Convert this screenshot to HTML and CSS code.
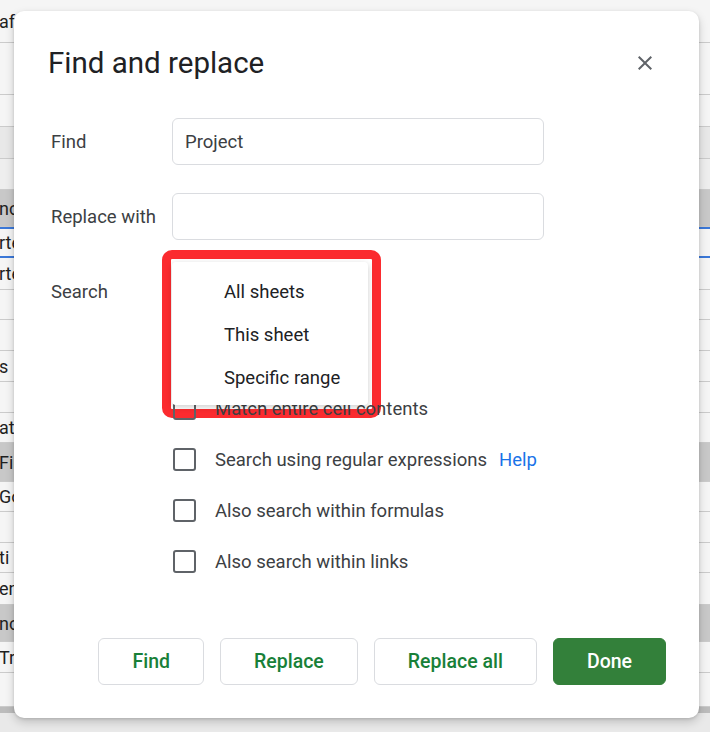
FILE: index.html
```html
<!DOCTYPE html>
<html lang="en">
<head>
  <meta charset="UTF-8">
  <title>Find and replace</title>
  <link rel="stylesheet" href="styles.css">
</head>
<body>
  <div class="sheet">
    <div class="row"><span>af</span></div>
    <div class="row"></div>
    <div class="row"></div>
    <div class="row shade-soft"></div>
    <div class="row shade-faint"></div>
    <div class="row shade"><span>nc</span></div>
    <div class="row selected"><span>rte</span></div>
    <div class="row"><span>rte</span></div>
    <div class="row"></div>
    <div class="row"></div>
    <div class="row"><span>s</span></div>
    <div class="row"></div>
    <div class="row"><span>ati</span></div>
    <div class="row shade"><span>Fin</span></div>
    <div class="row"><span>Go</span></div>
    <div class="row"></div>
    <div class="row"><span>ti</span></div>
    <div class="row"><span>en</span></div>
    <div class="row shade"><span>nc</span></div>
    <div class="row"><span>Tra</span></div>
    <div class="row"></div>
    <div class="row scrollbar"></div>
    <div class="row foot"></div>
  </div>

  <div class="dialog">
    <div class="dialog-head">
      <h1>Find and replace</h1>
      <button class="close" aria-label="Close">
        <svg viewBox="0 0 24 24" width="24" height="24"><path d="M19 6.41L17.59 5 12 10.59 6.41 5 5 6.41 10.59 12 5 17.59 6.41 19 12 13.41 17.59 19 19 17.59 13.41 12z" fill="#5f6368"/></svg>
      </button>
    </div>

    <div class="form">
      <label>Find</label>
      <div class="field">Project</div>
      <label>Replace with</label>
      <div class="field"></div>
      <label>Search</label>
      <div class="select">All sheets</div>
    </div>

    <div class="checks">
      <div class="check"><span class="box"></span>Match case</div>
      <div class="check"><span class="box"></span>Match entire cell contents</div>
      <div class="check"><span class="box"></span>Search using regular expressions <a class="help" href="#">Help</a></div>
      <div class="check"><span class="box"></span>Also search within formulas</div>
      <div class="check"><span class="box"></span>Also search within links</div>
    </div>

    <div class="actions">
      <button class="btn">Find</button>
      <button class="btn">Replace</button>
      <button class="btn">Replace all</button>
      <button class="btn primary">Done</button>
    </div>

    <div class="menu">
      <div class="menu-item">All sheets</div>
      <div class="menu-item">This sheet</div>
      <div class="menu-item">Specific range</div>
    </div>
    <div class="highlight"></div>
  </div>
</body>
</html>
```

FILE: styles.css
```css
body {
  margin: 0;
  width: 710px;
  height: 732px;
  overflow: hidden;
  position: relative;
  font-family: Roboto, "Noto Sans", sans-serif;
  background: #f1f1f1;
}

/* spreadsheet behind the modal */
.sheet {
  display: grid;
  grid-template-rows: 43px 52px 32px 32px 31px 37px 31px 32px 30px 31px 31px 31px 30px 39px 30px 31px 30px 32px 37px 31px 34px 6px 1fr;
  height: 732px;
}
.row {
  background: #f5f5f5;
  border-bottom: 1px solid #cbcbcb;
  display: flex;
  align-items: center;
  font-size: 18px;
  color: #1f1f1f;
  overflow: hidden;
  white-space: nowrap;
}
.row span {
  margin-left: -1px;
}
.shade-soft { background: #e8e8e8; }
.shade-faint { background: #eeeeee; }
.shade { background: #c8c8c8; }
.selected {
  border-top: 2px solid #3b78d8;
  border-bottom: 2px solid #3b78d8;
}
.scrollbar {
  background: #bcbcbc;
  border-bottom: none;
}
.foot {
  background: #e9e9e9;
  border-bottom: none;
}

/* dialog */
.dialog {
  position: absolute;
  left: 14px;
  top: 11px;
  width: 685px;
  height: 707px;
  box-sizing: border-box;
  padding: 34px 33px 33px 34px;
  background: #fff;
  border-radius: 10px;
  box-shadow: 0 4px 10px rgba(0,0,0,0.18), 0 1px 3px rgba(0,0,0,0.12);
  display: flex;
  flex-direction: column;
}
.dialog-head {
  display: flex;
  align-items: center;
  justify-content: space-between;
}
.dialog-head h1 {
  margin: 0;
  font-size: 29.5px;
  line-height: 36px;
  font-weight: 400;
  color: #202124;
}
.close {
  border: none;
  background: none;
  padding: 0;
  margin-right: 9px;
  width: 24px;
  height: 24px;
}

.form {
  margin-top: 37px;
  display: grid;
  grid-template-columns: 124px 372px;
  row-gap: 28px;
  align-items: center;
}
.form label {
  padding-left: 3px;
  font-size: 18.5px;
  color: #3c4043;
}
.field, .select {
  height: 47px;
  box-sizing: border-box;
  border: 1px solid #dadce0;
  border-radius: 6px;
  padding: 0 12px;
  display: flex;
  align-items: center;
  font-size: 18.5px;
  color: #3c4043;
}
.select {
  width: 196px;
}

.checks {
  position: relative;
  z-index: 2;
  margin-top: 17px;
  margin-left: 125px;
}
.check {
  height: 51px;
  display: flex;
  align-items: center;
  font-size: 18.5px;
  color: #3c4043;
}
.box {
  width: 23px;
  height: 23px;
  box-sizing: border-box;
  border: 2px solid #5f6368;
  border-radius: 3px;
  margin-right: 19px;
}
.help {
  color: #1a73e8;
  text-decoration: none;
  margin-left: 12px;
}

.actions {
  margin-top: auto;
  display: flex;
  justify-content: flex-end;
  gap: 16px;
}
.btn {
  height: 47px;
  padding: 0 33px;
  border: 1px solid #dadce0;
  border-radius: 6px;
  background: #fff;
  font-family: Roboto, sans-serif;
  font-size: 19.5px;
  font-weight: 500;
  color: #188038;
}
.btn.primary {
  background: #33803a;
  border-color: #33803a;
  color: #fff;
}

/* open dropdown of the Search field */
.menu {
  position: absolute;
  z-index: 3;
  left: 158px;
  top: 251px;
  width: 196px;
  padding: 8px 0 6px;
  background: #fff;
  border-radius: 4px;
  box-shadow: 0 2px 6px rgba(0,0,0,0.2);
}
.menu-item {
  height: 43px;
  display: flex;
  align-items: center;
  padding-left: 52px;
  font-size: 18.5px;
  color: #202124;
}

/* red annotation frame */
.highlight {
  position: absolute;
  z-index: 1;
  left: 148px;
  top: 239px;
  width: 219px;
  height: 168px;
  box-sizing: border-box;
  border: 9px solid #fb2b2f;
  border-radius: 10px;
}
```
